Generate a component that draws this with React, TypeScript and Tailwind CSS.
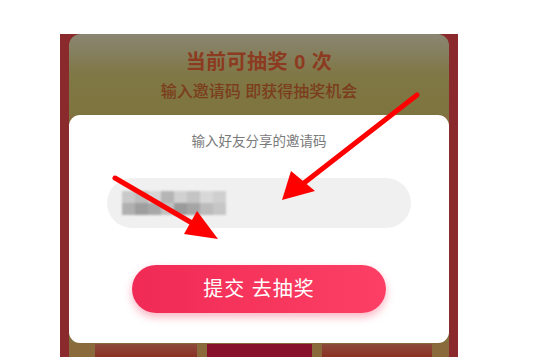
import React from 'react'

const blur = [
    ['#c9c9c9', '#bdbdbd', '#d6d6d6', '#b5b5b5', '#d0d0d0', '#c4c4c4', '#d8d8d8', '#cfcfcf'],
    ['#b0b0b0', '#9e9e9e', '#a8a8a8', '#c2c2c2', '#9a9a9a', '#a5a5a5', '#bcbcbc', '#c6c6c6'],
]

function App() {
    return (
        <div className="relative w-[543px] h-[359px] bg-white overflow-hidden pt-[34px] pl-[60px] font-['Liberation_Sans','Noto_Sans_CJK_SC',sans-serif]">
            {/* Red frame */}
            <div className="w-[398px] h-[323px] bg-[#8a2a2c] px-[9px]">
                <div className="flex flex-col h-full bg-[#84703e] rounded-t-[12px]">
                    {/* Dimmed header */}
                    <div className="h-[81px] rounded-t-[12px] bg-gradient-to-b from-[#8a8672] via-[#7f7745] to-[#7e743f] flex flex-col items-center pt-[14px]">
                        <h1 className="text-[20px] leading-[28px] font-bold text-[#8c3a20] tracking-[0.5px]">当前可抽奖 0 次</h1>
                        <p className="mt-[5px] text-[16px] leading-[22px] font-medium text-[#7b3d1c]">输入邀请码 即获得抽奖机会</p>
                    </div>

                    {/* Modal */}
                    <div className="h-[228px] bg-white rounded-[11px] flex flex-col items-center pt-[17px]">
                        <p className="text-[13.5px] leading-[20px] text-[#7a7a7a]">输入好友分享的邀请码</p>
                        <div className="mt-[26px] w-[304px] h-[50px] rounded-full bg-[#f0f0f0] flex items-center pl-[15px]">
                            <div className="grid grid-cols-8 w-[104px] h-[24px] blur-[1px]">
                                {blur.flat().map((c, i) => (
                                    <div key={i} style={{ backgroundColor: c }} />
                                ))}
                            </div>
                        </div>
                        <button className="mt-[37px] w-[254px] h-[48px] rounded-full bg-gradient-to-r from-[#f02a55] to-[#fd3f65] shadow-[0_4px_8px_rgba(240,40,80,0.35)] text-white text-[20px] tracking-[1px]">
                            提交 去抽奖
                        </button>
                    </div>

                    {/* Bottom tiles behind overlay */}
                    <div className="flex-1 bg-[#8a6a3a] flex gap-[10px] pl-[26px] pt-[1px]">
                        <div className="w-[102px] bg-gradient-to-b from-[#8c4a3c] to-[#8a2f22]" />
                        <div className="w-[105px] bg-[#87102a]" />
                        <div className="w-[110px] bg-gradient-to-b from-[#8c4a3c] to-[#8a2f22]" />
                    </div>
                </div>
            </div>

            {/* Annotation arrows */}
            <svg className="absolute inset-0 pointer-events-none" width="543" height="359" viewBox="0 0 543 359">
                <line x1="417" y1="95" x2="304" y2="183" stroke="#ff0000" strokeWidth="5" strokeLinecap="round" />
                <polygon points="282,200 291,171 315,191" fill="#ff0000" />
                <line x1="115" y1="178" x2="192" y2="223" stroke="#ff0000" strokeWidth="5" strokeLinecap="round" />
                <polygon points="218,239 184,234 197,211" fill="#ff0000" />
            </svg>
        </div>
    )
}

export default App
